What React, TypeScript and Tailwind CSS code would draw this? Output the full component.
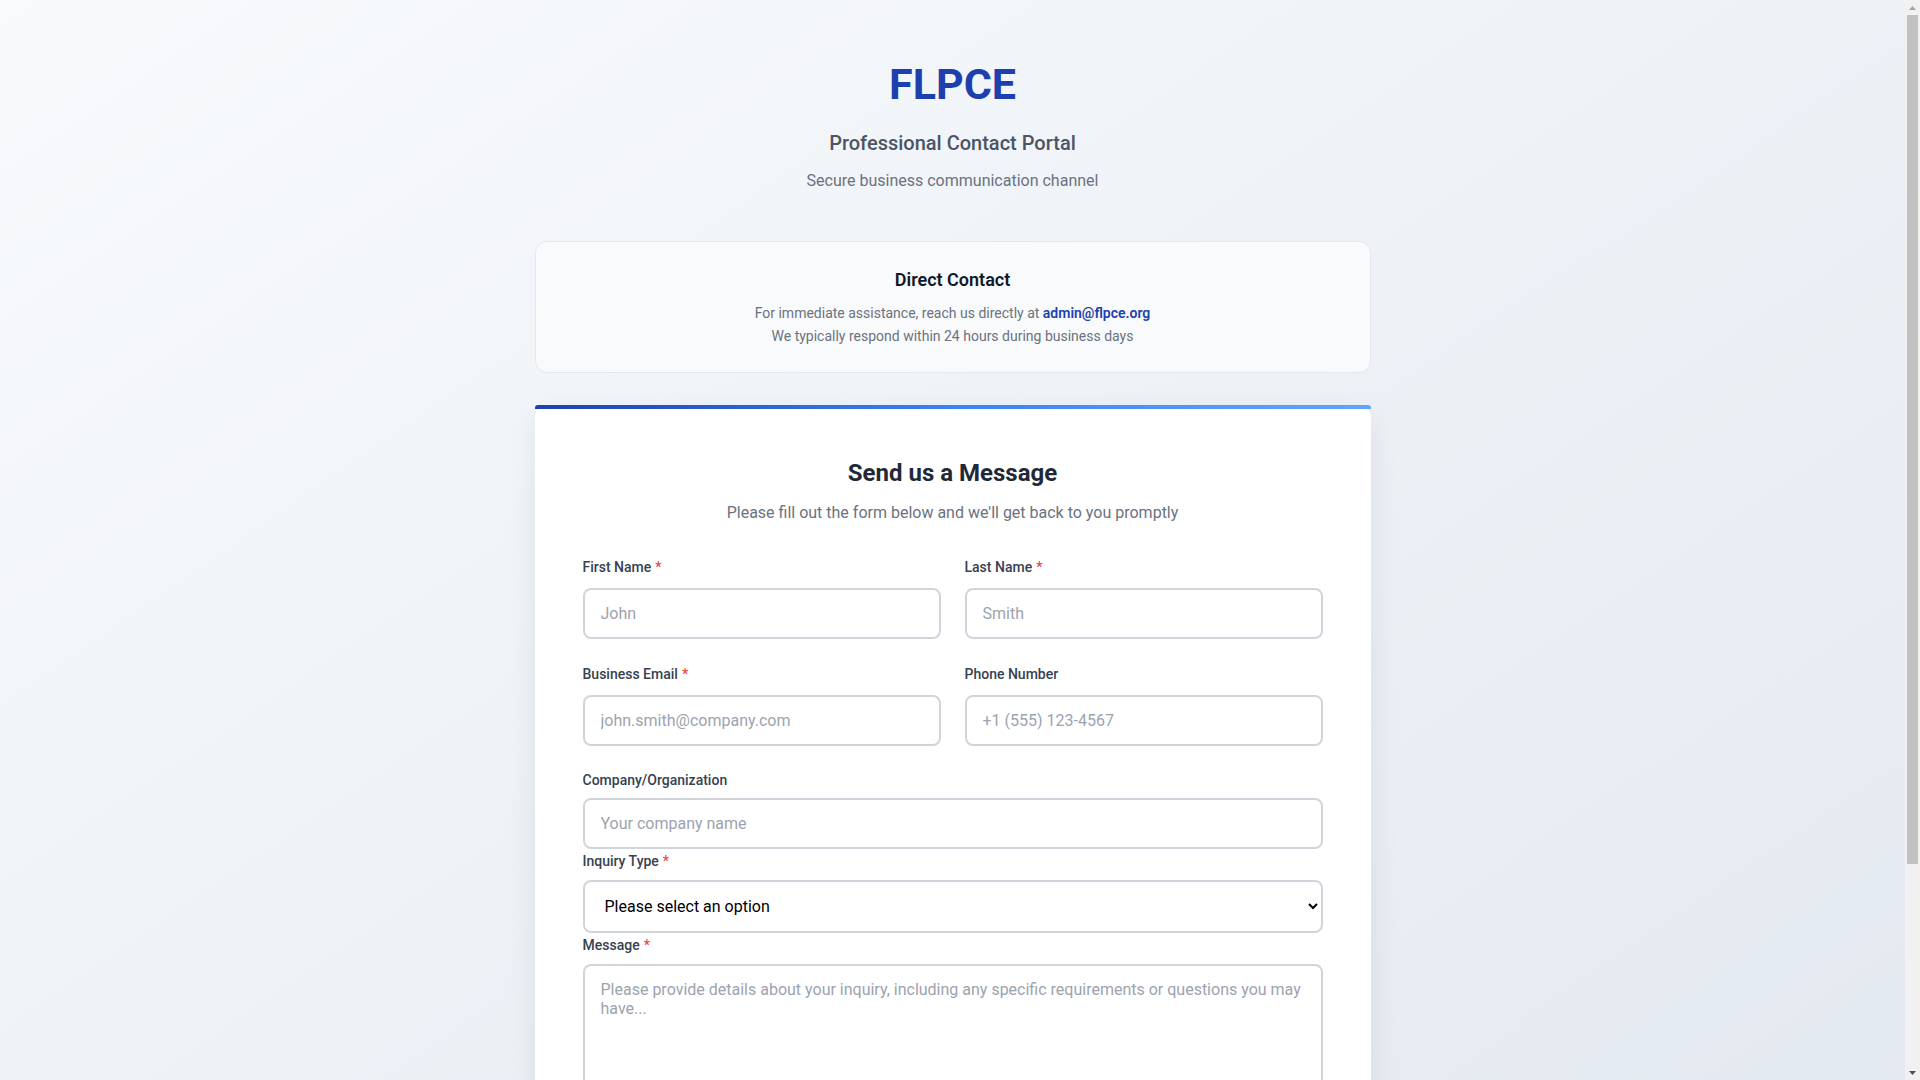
import React from "react";

type FieldProps = {
	label: string;
	required?: boolean;
	className?: string;
	labelClassName?: string;
	children: React.ReactNode;
};

const Field = ({
	label,
	required,
	className,
	labelClassName = "mb-2.5",
	children,
}: FieldProps) => (
	<div className={className}>
		<label
			className={
				"block text-sm leading-[21px] font-medium text-[#374151] " + labelClassName
			}>
			{label}
			{required && <span className="ml-1 text-[#ef4444]">*</span>}
		</label>
		{children}
	</div>
);

const inputClass =
	"block w-full rounded-lg border-2 border-[#d1d5db] bg-white px-4 py-3.5 text-base leading-[normal] text-[#111827] placeholder:text-[#9ca3af] outline-none focus:border-[#3b82f6]";

// the window's scrollbar, drawn so the page keeps the same width as the reference
const Scrollbar = () => (
	<div className="fixed top-0 right-0 flex h-screen w-[15px] flex-col items-center bg-[#f1f1f1]">
		<div className="flex h-[15px] w-full items-center justify-center">
			<svg width="7" height="4" viewBox="0 0 7 4">
				<path d="M0 4 L3.5 0 L7 4 Z" fill="#a3a3a3" />
			</svg>
		</div>
		<div className="h-[849px] w-[11px] bg-[#c1c1c1]" />
		<div className="flex-1" />
		<div className="flex h-[15px] w-full items-center justify-center">
			<svg width="7" height="4" viewBox="0 0 7 4">
				<path d="M0 0 L3.5 4 L7 0 Z" fill="#505050" />
			</svg>
		</div>
	</div>
);

export default function App() {
	const [inquiry, setInquiry] = React.useState("");

	return (
		<div className="min-h-screen bg-linear-to-br from-[#f8fafc] to-[#e2e8f0] pr-[15px] font-['Roboto','Liberation_Sans',sans-serif]">
			<div className="mx-auto max-w-[900px] px-8 pt-[58px] pb-16">
				<header className="mb-12 text-center">
					<h1 className="mb-[17px] text-[43px] leading-tight font-bold text-[#1e40af]">
						FLPCE
					</h1>
					<h2 className="mb-3 text-xl leading-7 font-medium text-[#4b5563]">
						Professional Contact Portal
					</h2>
					<p className="text-base leading-6 text-[#6b7280]">
						Secure business communication channel
					</p>
				</header>

				<section className="mb-8 rounded-xl border border-[#e2e8f0] bg-[#f8fafc] p-6 text-center">
					<h3 className="mb-2 text-lg leading-7 font-semibold text-[#111827]">
						Direct Contact
					</h3>
					<p className="text-sm leading-[23px] text-[#6b7280]">
						For immediate assistance, reach us directly at{" "}
						<a href="#" className="font-semibold text-[#1e40af]">
							admin@flpce.org
						</a>
					</p>
					<p className="text-sm leading-[23px] text-[#6b7280]">
						We typically respond within 24 hours during business days
					</p>
				</section>

				<section className="rounded-xl bg-white shadow-[0_10px_30px_rgba(15,23,42,0.08)]">
					<div className="h-1 rounded-t-[3px] bg-linear-to-r from-[#1e40af] via-[#3b82f6] to-[#60a5fa]" />
					<div className="p-12">
						<h2 className="mb-3 text-center text-2xl leading-8 font-bold text-[#1f2937]">
							Send us a Message
						</h2>
						<p className="mb-8 text-center text-base leading-6 text-[#6b7280]">
							Please fill out the form below and we'll get back to you promptly
						</p>

						<form onSubmit={(e) => e.preventDefault()}>
							<div className="grid grid-cols-2 gap-x-6">
								<Field label="First Name" required className="mb-[25px]">
									<input className={inputClass} placeholder="John" />
								</Field>
								<Field label="Last Name" required className="mb-[25px]">
									<input className={inputClass} placeholder="Smith" />
								</Field>
								<Field label="Business Email" required className="mb-6">
									<input
										type="email"
										className={inputClass}
										placeholder="john.smith@company.com"
									/>
								</Field>
								<Field label="Phone Number" className="mb-6">
									<input
										type="tel"
										className={inputClass}
										placeholder="+1 (555) 123-4567"
									/>
								</Field>
							</div>

							<Field label="Company/Organization" labelClassName="mb-[7px]">
								<input className={inputClass} placeholder="Your company name" />
							</Field>

							<Field label="Inquiry Type" required labelClassName="mt-0.5 mb-2">
								<select
									value={inquiry}
									onChange={(e) => setInquiry(e.target.value)}
									className="block w-full rounded-lg border-2 border-[#d1d5db] bg-white px-4 py-3.5 text-base leading-[normal] text-black outline-none">
									<option value="">Please select an option</option>
									<option value="partnership">Business Partnership</option>
									<option value="services">Professional Services</option>
									<option value="support">Technical Support</option>
									<option value="general">General Inquiry</option>
								</select>
							</Field>

							<Field
								label="Message"
								required
								className="mb-6"
								labelClassName="mt-0.5 mb-2">
								<textarea
									rows={6}
									className={inputClass + " min-h-[150px] resize-y"}
									placeholder="Please provide details about your inquiry, including any specific requirements or questions you may have..."
								/>
							</Field>

							<button
								type="submit"
								className="w-full rounded-lg bg-linear-to-r from-[#1e40af] to-[#3b82f6] px-6 py-4 text-base font-semibold text-white">
								Send Message
							</button>
						</form>
					</div>
				</section>
			</div>
			<Scrollbar />
		</div>
	);
}
